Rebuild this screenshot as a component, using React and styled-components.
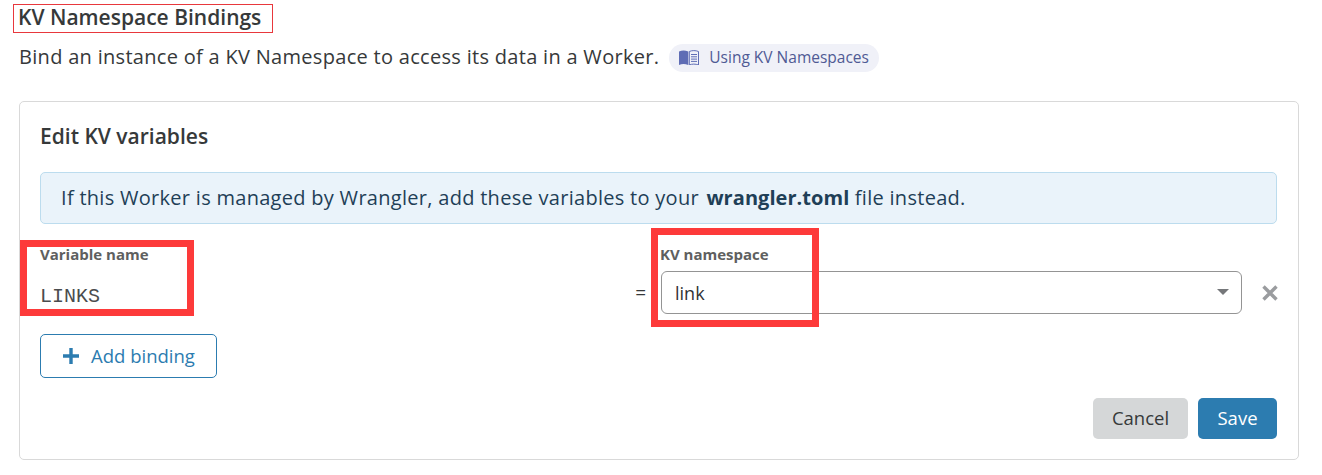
import React from 'react';
import styled, { createGlobalStyle } from 'styled-components';

const GlobalStyle = createGlobalStyle`
    html, body {
        margin: 0;
        padding: 0;
        background: #fff;
        font-family: "Open Sans", "Noto Sans", "Liberation Sans", sans-serif;
        color: #36393a;
    }
`;

const Page = styled.div`
    position: relative;
    width: 1322px;
    height: 475px;
    box-sizing: border-box;
    padding: 4px 23px 0 19px;
    overflow: hidden;
`;

const Title = styled.h2`
    display: block;
    width: 260px;
    height: 29px;
    box-sizing: border-box;
    margin: 0 0 0 -6px;
    padding-left: 4px;
    border: 1px solid #e8383d;
    font-size: 21px;
    font-weight: 600;
    line-height: 24px;
    white-space: nowrap;
`;

const Description = styled.div`
    display: flex;
    align-items: flex-start;
    margin-top: 9px;
    height: 30px;
    font-size: 20px;
    line-height: 29px;
    letter-spacing: 0.3px;
    white-space: nowrap;
`;

const DocsLink = styled.a`
    display: inline-flex;
    align-items: center;
    gap: 10px;
    height: 28px;
    box-sizing: border-box;
    margin: 2px 0 0 10px;
    padding: 0 10px 1px;
    border-radius: 14px;
    background: #f0f1f8;
    color: #4f5a94;
    font-size: 15.5px;
    letter-spacing: 0;
`;

const Card = styled.section`
    margin-top: 29px;
    height: 359px;
    box-sizing: border-box;
    padding: 21px 21px 20px 20px;
    border: 1px solid #d9d9d9;
    border-radius: 5px;
    display: flex;
    flex-direction: column;
`;

const CardTitle = styled.h3`
    margin: 0;
    height: 29px;
    font-size: 21px;
    font-weight: 600;
    line-height: 27px;
`;

const Notice = styled.div`
    margin-top: 20px;
    height: 52px;
    box-sizing: border-box;
    display: block;
    padding: 0 20px;
    border: 1px solid #bcdcee;
    border-radius: 5px;
    background: #eaf3fa;
    color: #1f3f57;
    font-size: 20px;
    line-height: 50px;
    letter-spacing: 0.29px;
    white-space: nowrap;

    b {
        font-weight: 700;
        letter-spacing: 0.05px;
        margin-left: 2px;
    }
`;

const BindingRow = styled.div`
    margin-top: 19px;
    display: flex;
    align-items: flex-start;
`;

const NameField = styled.div`
    position: relative;
    flex: none;
    width: 594px;
`;

const FieldLabel = styled.div`
    height: ${(p) => p.$height}px;
    margin-left: ${(p) => p.$shift || 0}px;
    font-size: 15px;
    font-weight: 700;
    line-height: 22px;
    color: #5e5f60;
`;

const NameValue = styled.div`
    margin-top: 21px;
    font-family: "Liberation Mono", monospace;
    font-size: 20px;
    line-height: 22px;
    color: #4a4c4e;
`;

const Equals = styled.div`
    flex: none;
    width: 27px;
    margin-top: 37px;
    font-size: 19px;
    line-height: 24px;
    padding-right: 15px;
    box-sizing: border-box;
    text-align: right;
`;

const NamespaceField = styled.div`
    position: relative;
    flex: none;
    width: 581px;
`;

const Select = styled.div`
    height: 43px;
    box-sizing: border-box;
    display: flex;
    align-items: center;
    justify-content: space-between;
    padding: 0 12px 0 13px;
    border: 1px solid #949494;
    border-radius: 6px;
    font-size: 18px;
    color: #313335;
`;

const Caret = styled.span`
    width: 0;
    height: 0;
    border-left: 6px solid transparent;
    border-right: 6px solid transparent;
    border-top: 6px solid #75777a;
    margin-top: -2px;
`;

const RemoveButton = styled.div`
    flex: none;
    margin: 41px 0 0 19px;
    width: 18px;
    height: 18px;
    color: #9a9c9f;
`;

const Highlight = styled.div`
    position: absolute;
    box-sizing: border-box;
    border: 7px solid #fd3a3a;
    pointer-events: none;
    left: ${(p) => p.$left}px;
    top: ${(p) => p.$top}px;
    width: ${(p) => p.$width}px;
    height: ${(p) => p.$height}px;
`;

const AddButton = styled.button`
    align-self: flex-start;
    margin-top: 20px;
    width: 177px;
    height: 44px;
    display: flex;
    align-items: center;
    justify-content: center;
    gap: 11px;
    border: 1px solid #2c7cb0;
    border-radius: 5px;
    background: #fff;
    color: #2c7cb0;
    font-family: inherit;
    font-size: 18.5px;
    padding: 0 0 1px;
`;

const Footer = styled.div`
    margin-top: 20px;
    display: flex;
    justify-content: flex-end;
    gap: 10px;
`;

const ActionButton = styled.button`
    width: ${(p) => p.$width}px;
    height: 41px;
    border: none;
    border-radius: 5px;
    padding: 0 0 2px;
    font-family: inherit;
    font-size: 18.5px;
    background: ${(p) => (p.$primary ? '#2c7cb0' : '#d5d7d8')};
    color: ${(p) => (p.$primary ? '#fff' : '#36393a')};
`;

const BookIcon = () => (
    <svg width="20" height="15" viewBox="0 0 20 15">
        <path d="M0 1.5 C3 0.3 6 0.3 9.3 1.5 V15 C6 13.8 3 13.8 0 15 Z" fill="#5f6db5" />
        <path d="M10.3 1.5 C13 0.3 16.5 0.3 19.5 1.5 V15 C16.5 13.8 13 13.8 10.3 15 Z" fill="none" stroke="#5f6db5" strokeWidth="1" />
        <path d="M12 4.5H18M12 6.8H18M12 9.1H18M12 11.4H18" stroke="#5f6db5" strokeWidth="1" />
    </svg>
);

const CloseIcon = () => (
    <svg width="18" height="18" viewBox="0 0 18 18">
        <path d="M2.5 2.5 L15.5 15.5 M15.5 2.5 L2.5 15.5" stroke="currentColor" strokeWidth="3.4" />
    </svg>
);

const PlusIcon = () => (
    <svg width="18" height="18" viewBox="0 0 18 18">
        <path d="M9 1 V17 M1 9 H17" stroke="#2c7cb0" strokeWidth="3.4" />
    </svg>
);

const App = () => (
    <Page>
        <GlobalStyle />
        <Title>KV Namespace Bindings</Title>
        <Description>
            Bind an instance of a KV Namespace to access its data in a Worker.
            <DocsLink>
                <BookIcon />
                Using KV Namespaces
            </DocsLink>
        </Description>
        <Card>
            <CardTitle>Edit KV variables</CardTitle>
            <Notice>
                If this Worker is managed by Wrangler, add these variables to your{' '}
                <b>wrangler.toml</b> file instead.
            </Notice>
            <BindingRow>
                <NameField>
                    <FieldLabel $height={22}>Variable name</FieldLabel>
                    <NameValue>LINKS</NameValue>
                    <Highlight $left={-20} $top={-3} $width={174} $height={76} />
                </NameField>
                <Equals>=</Equals>
                <NamespaceField>
                    <FieldLabel $height={28} $shift={-1}>KV namespace</FieldLabel>
                    <Select>
                        link
                        <Caret />
                    </Select>
                    <Highlight $left={-10} $top={-15} $width={168} $height={99} />
                </NamespaceField>
                <RemoveButton>
                    <CloseIcon />
                </RemoveButton>
            </BindingRow>
            <AddButton>
                <PlusIcon />
                Add binding
            </AddButton>
            <Footer>
                <ActionButton $width={95}>Cancel</ActionButton>
                <ActionButton $width={79} $primary>Save</ActionButton>
            </Footer>
        </Card>
    </Page>
);

export default App;
